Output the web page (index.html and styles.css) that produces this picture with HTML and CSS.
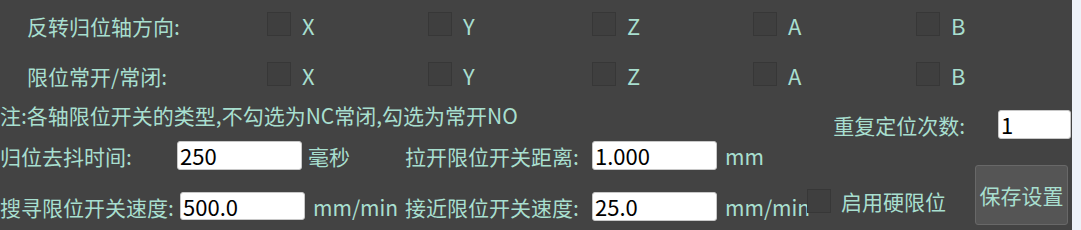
FILE: index.html
```html
<!DOCTYPE html>
<html lang="zh-CN">
<head>
    <meta charset="UTF-8">
    <title>回零设置</title>
    <link rel="stylesheet" href="styles.css">
</head>
<body>
    <div class="panel">
        <div class="axis-grid">
            <div class="axis-label">反转归位轴方向:</div>
            <label class="axis"><span class="box"></span>X</label>
            <label class="axis"><span class="box"></span>Y</label>
            <label class="axis"><span class="box"></span>Z</label>
            <label class="axis"><span class="box"></span>A</label>
            <label class="axis"><span class="box"></span>B</label>

            <div class="axis-label">限位常开/常闭:</div>
            <label class="axis"><span class="box"></span>X</label>
            <label class="axis"><span class="box"></span>Y</label>
            <label class="axis"><span class="box"></span>Z</label>
            <label class="axis"><span class="box"></span>A</label>
            <label class="axis"><span class="box"></span>B</label>
        </div>

        <div class="note-row">
            <div class="note">注:各轴限位开关的类型,不勾选为NC常闭,勾选为常开NO</div>
            <div class="repeat">
                <span>重复定位次数:</span>
                <input class="field small" type="text" value="1">
            </div>
        </div>

        <div class="param-grid">
            <div class="cell">归位去抖时间:</div>
            <div class="cell"><input class="field" type="text" value="250"></div>
            <div class="cell">毫秒</div>
            <div class="cell">拉开限位开关距离:</div>
            <div class="cell"><input class="field" type="text" value="1.000"></div>
            <div class="cell">mm</div>
            <div class="cell"></div>
            <button class="save">保存设置</button>

            <div class="cell">搜寻限位开关速度:</div>
            <div class="cell"><input class="field shift" type="text" value="500.0"></div>
            <div class="cell unit">mm/min</div>
            <div class="cell">接近限位开关速度:</div>
            <div class="cell"><input class="field" type="text" value="25.0"></div>
            <div class="cell">mm/min</div>
            <label class="hard"><span class="box"></span>启用硬限位</label>
        </div>
    </div>
</body>
</html>
```

FILE: styles.css
```css
html, body {
    margin: 0;
    padding: 0;
}
body {
    background: #eef2f9;
    font-family: "Noto Sans CJK SC", "Noto Sans", sans-serif;
    font-size: 21px;
    color: #a8dfcf;
}
.panel {
    width: 1072px;
    height: 230px;
    background: #434343;
    overflow: hidden;
}
.axis-grid {
    display: grid;
    grid-template-columns: 240px 161px 164px 161px 163px 156px;
    grid-auto-rows: 50px;
    padding-left: 27px;
    align-items: center;
}
.axis-label {
    line-height: 1;
    padding-top: 2px;
}
.axis {
    display: flex;
    align-items: center;
    gap: 11px;
    line-height: 1;
    font-size: 22px;
}
.box {
    display: inline-block;
    flex: none;
    width: 24px;
    height: 24px;
    box-sizing: border-box;
    border: 1px solid #373737;
    background: #3f3f3f;
}
.axis .box {
    margin-top: -2px;
}
.note-row {
    display: flex;
    justify-content: space-between;
    align-items: flex-start;
    height: 38px;
}
.note {
    line-height: 30px;
}
.repeat {
    display: flex;
    align-items: center;
    margin-top: 8px;
    padding-right: 1px;
}
.repeat span {
    margin-right: 33px;
    padding-top: 2px;
}
.field {
    width: 125px;
    height: 29px;
    box-sizing: border-box;
    border: 1px solid #c8c8c8;
    border-radius: 3px;
    background: #fff;
    color: #000;
    font-family: "Noto Sans CJK SC", "Noto Sans", sans-serif;
    font-size: 22px;
    padding: 0 2px;
    outline: none;
}
.field.small {
    width: 73px;
}
.field.shift {
    margin-left: 3px;
    height: 28px;
}
.param-grid {
    display: grid;
    grid-template-columns: 177px 131px 97px 187px 133px 82px 168px 93px;
    grid-template-rows: 34px 34px;
    row-gap: 17px;
    align-items: center;
}
.cell {
    display: flex;
    align-items: center;
    line-height: 1;
    padding-top: 2px;
    white-space: nowrap;
}
.cell:has(.field) {
    padding-top: 0;
}
.unit {
    padding-left: 5px;
}
.hard {
    display: flex;
    align-items: center;
    gap: 10px;
    align-self: start;
    line-height: 1;
    white-space: nowrap;
}
.save {
    grid-column: 8;
    grid-row: 1 / span 2;
    align-self: start;
    margin-top: 27px;
    width: 93px;
    height: 60px;
    background: #555;
    border: 1px solid #686868;
    border-radius: 3px;
    color: #a8dfcf;
    font-family: "Noto Sans CJK SC", "Noto Sans", sans-serif;
    font-size: 21px;
    padding: 0;
}
```
